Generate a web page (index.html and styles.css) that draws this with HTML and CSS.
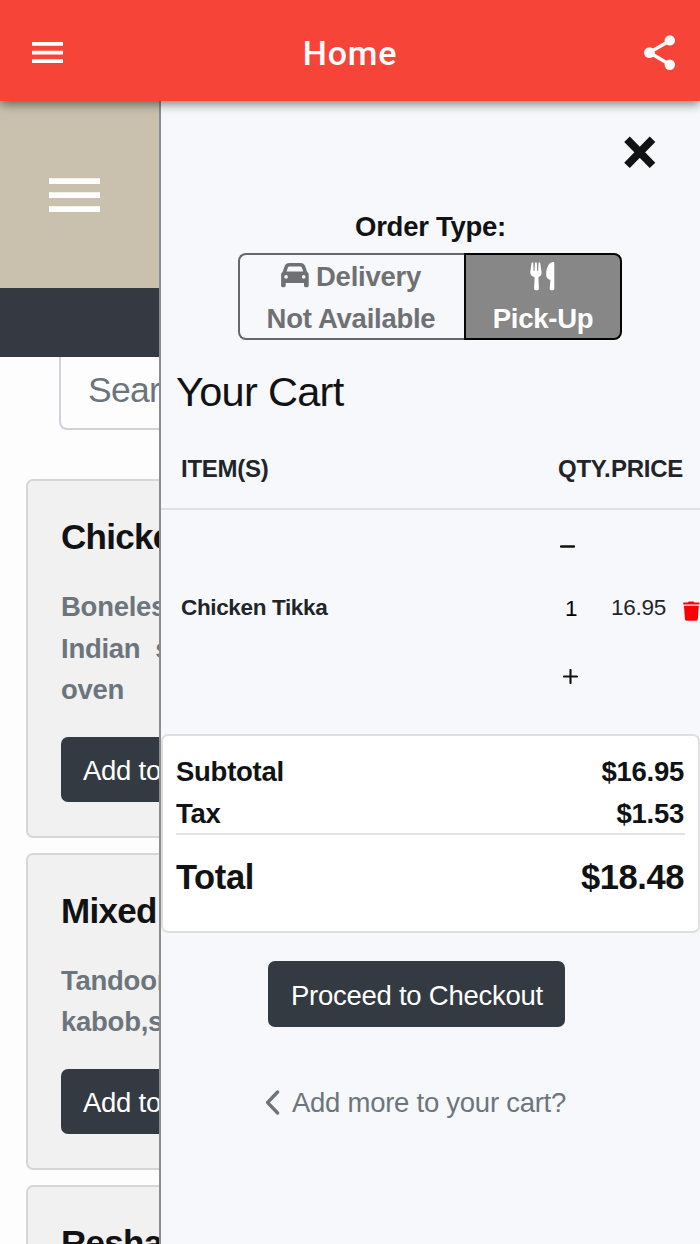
FILE: index.html
```html
<!DOCTYPE html>
<html lang="en">
<head>
<meta charset="utf-8">
<title>Home</title>
<link rel="stylesheet" href="styles.css">
</head>
<body>
<header class="appbar">
  <svg class="appbar-menu" width="32" height="22" viewBox="0 0 32 22"><path fill="#fff" d="M0 0h31v3.8H0zM0 8.7h31v3.7H0zM0 17.2h31V21H0z"/></svg>
  <h1 class="appbar-title">Home</h1>
  <svg class="appbar-share" width="32" height="36" viewBox="0 0 32 36"><path d="M26 5.5 5.5 17.5 26 29.7" fill="none" stroke="#fff" stroke-width="3.4"/><g fill="#fff"><circle cx="25.8" cy="5.4" r="5.2"/><circle cx="5.5" cy="17.6" r="5.4"/><circle cx="25.8" cy="29.8" r="5.2"/></g></svg>
</header>
<main class="shell">
  <section class="menu-page">
    <div class="brand"><svg width="51" height="34" viewBox="0 0 51 34"><path fill="#fff" d="M0 .3h51v5.700H0zM0 14.200h51v5.700H0zM0 28.200h51v5.700H0z"/></svg></div>
    <div class="navstrip"></div>
    <div class="search">Sear</div>
    <div class="cards">
      <article class="card">
        <h2>Chicke</h2>
        <p>Boneles<br>Indian&nbsp; s<br>oven</p>
        <div class="btn add">Add to</div>
      </article>
      <article class="card">
        <h2>Mixed</h2>
        <p>Tandoor<br>kabob,s</p>
        <div class="btn add">Add to</div>
      </article>
      <article class="card">
        <h2>Resha</h2>
      </article>
    </div>
  </section>
  <aside class="drawer">
    <div class="close"><svg width="32" height="33" viewBox="0 0 32 33"><path d="M3 3.2 28.500 29.400M28.500 3.2 3 29.400" stroke="#111214" stroke-width="7.8"/></svg></div>
    <h3 class="order-label">Order Type:</h3>
    <div class="toggle">
      <div class="opt delivery">
        <span class="line"><svg width="28" height="26" viewBox="0 0 28 26"><path fill="#6f7074" fill-rule="evenodd" d="M8.2 0h11.4c2.2 0 3.7 1 4.5 3l2.1 6c1 .7 1.5 1.8 1.5 3v10.5c0 1-.6 1.7-1.6 1.7h-1.500c-1 0-1.600-.7-1.600-1.700V20H4.700v2.500c0 1-.6 1.700-1.600 1.700H1.700c-1 0-1.600-.7-1.600-1.700V12c0-1.200.5-2.300 1.500-3l2.100-6c.8-2 2.300-3 4.500-3zM8.500 3.400c-.8 0-1.300.4-1.600 1.100L5.600 8.600h16.600l-1.400-4.100c-.3-.7-.8-1.100-1.600-1.100zM5.100 12.100a1.800 1.800 0 1 0 0 3.600 1.800 1.800 0 0 0 0-3.600zm17.600 0a1.800 1.800 0 1 0 0 3.600 1.800 1.800 0 0 0 0-3.600z"/></svg>Delivery</span>
        <span class="line">Not Available</span>
      </div>
      <div class="opt pickup">
        <span class="line"><svg width="26" height="29" viewBox="0 0 26 29"><path fill="#fff" d="M1.600 1c.2-.9 1.600-.9 1.700 0l.3 8h.8L5 1c.1-.9 1.700-.9 1.800 0l.5 8h.8L8.500 1c.1-.9 1.500-.9 1.700 0l1.300 8.500c.4 3-.8 4.800-3.100 5.700l.5 11.300c.1 1.100-.6 1.700-1.600 1.700h-1.600c-1 0-1.600-.6-1.600-1.700l.5-11.300C1.500 14.300 0 12.500.3 9.500zM24.300 1.500v25c0 1.100-.6 1.700-1.600 1.700h-1.500c-1 0-1.600-.6-1.500-1.700l.7-8.600c-2.500-.8-4.100-2.300-4.100-4.500C15.700 8 18.300.3 22.800.1c.9 0 1.500.5 1.500 1.400z"/></svg></span>
        <span class="line">Pick-Up</span>
      </div>
    </div>
    <h2 class="cart-title">Your Cart</h2>
    <div class="row head"><span>ITEM(S)</span><span class="qty-h">QTY.</span><span>PRICE</span></div>
    <div class="row item">
      <span class="name">Chicken Tikka</span>
      <span class="qty">
        <svg class="minus" width="15" height="15" viewBox="0 0 15 15"><path d="M1 7.500h13" stroke="#111" stroke-width="2.300" stroke-linecap="round"/></svg>
        <b>1</b>
        <svg class="plus" width="15" height="15" viewBox="0 0 15 15"><path d="M1 7.500h13M7.500 1v13" stroke="#111" stroke-width="2.100" stroke-linecap="round"/></svg>
      </span>
      <span class="price">16.95</span>
      <svg class="trash" width="17" height="20" viewBox="0 0 17 20"><path fill="#fb0007" d="M.2 1.500h4.700L5.800.4h4.700l.9 1.100h5v2.100H.2zM.9 4.700h14.900l-1 13.600c-.1.900-.7 1.400-1.500 1.400H3.500c-.8 0-1.400-.5-1.500-1.400z"/></svg>
    </div>
    <div class="totals">
      <div class="sum"><span class="t-sub">Subtotal</span><span>$16.95</span></div>
      <div class="sum last"><span>Tax</span><span>$1.53</span></div>
      <div class="sum grand"><span>Total</span><span>$18.48</span></div>
    </div>
    <div class="btn checkout">Proceed to Checkout</div>
    <div class="more"><svg width="15" height="25" viewBox="0 0 15 25"><path d="M12.600 2 2.600 12.500l10 10.500" fill="none" stroke="#6c757d" stroke-width="3.300" stroke-linecap="round" stroke-linejoin="round"/></svg>Add more to your cart?</div>
  </aside>
</main>
</body>
</html>
```
FILE: styles.css
```css
* { box-sizing: border-box; }
body {
  margin: 0;
  width: 700px;
  height: 1244px;
  overflow: hidden;
  display: flex;
  flex-direction: column;
  background: #fdfdfe;
  color: #111214;
  font-family: "Liberation Sans", Arial, sans-serif;
  font-size: 27.500px;
  letter-spacing: -.26px;
  line-height: 41.6px;
}
h1, h2, h3, p { margin: 0; }
svg { display: block; flex: none; }

.appbar {
  flex: none;
  height: 101px;
  padding: 5px 24px 0 32px;
  display: grid;
  grid-template-columns: 100px 1fr 100px;
  align-items: center;
  background: #f74438;
  box-shadow: 0 3px 10px rgba(0, 0, 0, .5);
  z-index: 2;
}
.appbar-title {
  color: #fff;
  font: 500 34px/42px Roboto, sans-serif;
  text-align: center;
  letter-spacing: .8px;
  padding: 0 8px 0 0;
}
.appbar-share { justify-self: end; }

.shell { flex: 1; min-height: 0; display: flex; }

.menu-page {
  width: 159px;
  flex: none;
  overflow: hidden;
  white-space: nowrap;
}
.brand { height: 187px; padding: 77px 0 0 49px; background: #c9c0ad; }
.navstrip { height: 69px; background: #353a42; }
.search {
  width: 580px;
  height: 73px;
  margin-left: 59px;
  padding: 13px 0 0 27px;
  border: 2px solid #d0d2d8;
  border-top: 0;
  border-radius: 0 0 8px 8px;
  color: #6c757d;
  font-size: 35.500px;
  letter-spacing: -.7px;
}
.cards {
  width: 648px;
  margin: 49px 0 0 26px;
  display: flex;
  flex-direction: column;
  gap: 15px;
}
.card {
  padding: 35px 33px 34px;
  background: #f1f1f1;
  border: 2px solid #d6d6d7;
  border-radius: 7px;
}
.card h2 { font-size: 35px; line-height: 42px; letter-spacing: -.7px; }
.card p { margin: 28px 0 26px; color: #6c757d; font-weight: 700; }
.btn {
  height: 65px;
  line-height: 65px;
  padding: 1px 22px 0;
  border-radius: 7px;
  background: #343a41;
  color: #fff;
}
.add { width: 200px; }

.drawer {
  flex: 1;
  min-width: 0;
  display: flex;
  flex-direction: column;
  background: #f7f8fb;
  border-left: 2px solid #8b8c8f;
}
.close { padding: 35px 44px 0 0; display: flex; justify-content: flex-end; }
.order-label { margin: 37px 0 0; text-align: center; font-size: 27.500px; line-height: 42px; }
.toggle {
  width: 384px;
  height: 87px;
  margin: 5px 0 0 77px;
  display: flex;
  font-weight: 700;
}
.opt { display: flex; flex-direction: column; padding-top: 1px; }
.line { flex: none; height: 41.600px; display: flex; align-items: center; justify-content: center; gap: 7px; }
.line svg { margin-top: -1px; }
.delivery {
  width: 226px;
  padding-right: 2px;
  border: 2px solid #66676b;
  border-right: 0;
  border-radius: 8px 0 0 8px;
  color: #6f7074;
}
.pickup {
  flex: 1;
  border: 2px solid #050505;
  border-radius: 0 8px 8px 0;
  background: #878787;
  color: #fff;
}
.cart-title { margin: 28px 0 0 15px; font-size: 41.500px; line-height: 48px; font-weight: 400; letter-spacing: -.7px; }

.row { display: grid; grid-template-columns: 377px 53px 72px 1fr; padding-left: 20px; }
.head {
  margin-top: 14px;
  height: 80px;
  padding-top: 18px;
  border-bottom: 2px solid #dee0e4;
  color: #212529;
  font-size: 24px;
  font-weight: 700;
}
.head span { white-space: nowrap; }
.item { height: 224px; align-items: center; font-size: 22.500px; padding-bottom: 28px; }
.name { font-weight: 700; color: #212529; letter-spacing: -.35px; }
.qty { display: flex; flex-direction: column; align-items: flex-start; padding-top: 7px; }
.qty b { font-weight: 400; color: #000; padding-left: 7px; margin: 34px 0 40px; }
.minus { margin-left: 2px; }
.plus { margin-left: 5px; }
.price { color: #212529; }
.trash { margin: 6px 0 0 0; }

.totals {
  height: 199px;
  padding: 15px 13px 0;
  background: #fff;
  border: 2px solid #dfdfe1;
  border-radius: 7px;
  font-weight: 700;
}
.sum { display: flex; justify-content: space-between; padding-right: 1px; }
.last { border-bottom: 2px solid #e2e2e4; height: 42px; line-height: 41px; }
.grand { font-size: 34.500px; line-height: 42px; margin-top: 21px; letter-spacing: -.4px; }
.checkout { width: 297px; height: 66px; margin: 28px 0 0 107px; padding: 2px 0 0 23px; }
.more { margin: 55px 0 0 104px; display: flex; align-items: center; gap: 12px; color: #6c757d; }
```
